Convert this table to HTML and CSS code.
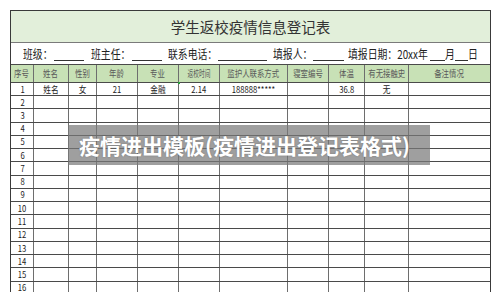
FILE: index.html
```html
<!DOCTYPE html>
<html lang="zh">
<head>
<meta charset="utf-8">
<link rel="stylesheet" href="styles.css">
</head>
<body>
<div class="sheet">
  <div class="title">学生返校疫情信息登记表</div>
  <div class="info">
    <div class="lab w31"><span>班级：</span></div><div class="ul w30"></div>
    <div class="lab w41 g7"><span>班主任：</span></div><div class="ul w30"></div>
    <div class="lab w50 g6"><span>联系电话：</span></div><div class="ul w49"></div>
    <div class="lab w40 g6"><span>填报人：</span></div><div class="ul w31"></div>
    <div class="lab w82 g4"><span>填报日期：20xx年</span></div><div class="ul w15"></div>
    <div class="lab w10"><span>月</span></div><div class="ul w13"></div>
    <div class="lab w12"><span>日</span></div>
  </div>
  <div class="row head">
    <div class="c"><span>序号</span></div>
    <div class="c"><span>姓名</span></div>
    <div class="c"><span>性别</span></div>
    <div class="c"><span>年龄</span></div>
    <div class="c"><span>专业</span></div>
    <div class="c"><span class="nar">返校时间</span></div>
    <div class="c"><span>监护人联系方式</span></div>
    <div class="c"><span>寝室编号</span></div>
    <div class="c"><span>体温</span></div>
    <div class="c"><span>有无接触史</span></div>
    <div class="c"><span>备注情况</span></div>
  </div>
  <div class="row first">
    <div class="c"><span>1</span></div>
    <div class="c"><span>姓名</span></div>
    <div class="c"><span>女</span></div>
    <div class="c"><span>21</span></div>
    <div class="c"><span>金融</span></div>
    <div class="c sel"><span>2.14</span></div>
    <div class="c"><span>188888*****</span></div>
    <div class="c"></div>
    <div class="c"><span>36.8</span></div>
    <div class="c"><span>无</span></div>
    <div class="c"></div>
  </div>
  <div class="row"><div class="c"><span>2</span></div><div class="c"></div><div class="c"></div><div class="c"></div><div class="c"></div><div class="c"></div><div class="c"></div><div class="c"></div><div class="c"></div><div class="c"></div><div class="c"></div></div>
  <div class="row"><div class="c"><span>3</span></div><div class="c"></div><div class="c"></div><div class="c"></div><div class="c"></div><div class="c"></div><div class="c"></div><div class="c"></div><div class="c"></div><div class="c"></div><div class="c"></div></div>
  <div class="row"><div class="c"><span>4</span></div><div class="c"></div><div class="c"></div><div class="c"></div><div class="c"></div><div class="c"></div><div class="c"></div><div class="c"></div><div class="c"></div><div class="c"></div><div class="c"></div></div>
  <div class="row"><div class="c"><span>5</span></div><div class="c"></div><div class="c"></div><div class="c"></div><div class="c"></div><div class="c"></div><div class="c"></div><div class="c"></div><div class="c"></div><div class="c"></div><div class="c"></div></div>
  <div class="row"><div class="c"><span>6</span></div><div class="c"></div><div class="c"></div><div class="c"></div><div class="c"></div><div class="c"></div><div class="c"></div><div class="c"></div><div class="c"></div><div class="c"></div><div class="c"></div></div>
  <div class="row"><div class="c"><span>7</span></div><div class="c"></div><div class="c"></div><div class="c"></div><div class="c"></div><div class="c"></div><div class="c"></div><div class="c"></div><div class="c"></div><div class="c"></div><div class="c"></div></div>
  <div class="row"><div class="c"><span>8</span></div><div class="c"></div><div class="c"></div><div class="c"></div><div class="c"></div><div class="c"></div><div class="c"></div><div class="c"></div><div class="c"></div><div class="c"></div><div class="c"></div></div>
  <div class="row"><div class="c"><span>9</span></div><div class="c"></div><div class="c"></div><div class="c"></div><div class="c"></div><div class="c"></div><div class="c"></div><div class="c"></div><div class="c"></div><div class="c"></div><div class="c"></div></div>
  <div class="row"><div class="c"><span>10</span></div><div class="c"></div><div class="c"></div><div class="c"></div><div class="c"></div><div class="c"></div><div class="c"></div><div class="c"></div><div class="c"></div><div class="c"></div><div class="c"></div></div>
  <div class="row"><div class="c"><span>11</span></div><div class="c"></div><div class="c"></div><div class="c"></div><div class="c"></div><div class="c"></div><div class="c"></div><div class="c"></div><div class="c"></div><div class="c"></div><div class="c"></div></div>
  <div class="row"><div class="c"><span>12</span></div><div class="c"></div><div class="c"></div><div class="c"></div><div class="c"></div><div class="c"></div><div class="c"></div><div class="c"></div><div class="c"></div><div class="c"></div><div class="c"></div></div>
  <div class="row"><div class="c"><span>13</span></div><div class="c"></div><div class="c"></div><div class="c"></div><div class="c"></div><div class="c"></div><div class="c"></div><div class="c"></div><div class="c"></div><div class="c"></div><div class="c"></div></div>
  <div class="row"><div class="c"><span>14</span></div><div class="c"></div><div class="c"></div><div class="c"></div><div class="c"></div><div class="c"></div><div class="c"></div><div class="c"></div><div class="c"></div><div class="c"></div><div class="c"></div></div>
  <div class="row"><div class="c"><span>15</span></div><div class="c"></div><div class="c"></div><div class="c"></div><div class="c"></div><div class="c"></div><div class="c"></div><div class="c"></div><div class="c"></div><div class="c"></div><div class="c"></div></div>
  <div class="row"><div class="c"><span>16</span></div><div class="c"></div><div class="c"></div><div class="c"></div><div class="c"></div><div class="c"></div><div class="c"></div><div class="c"></div><div class="c"></div><div class="c"></div><div class="c"></div></div>
</div>
<div class="banner">疫情进出模板(疫情进出登记表格式)</div>
</body>
</html>
```

FILE: styles.css
```css
html, body {
  margin: 0;
  padding: 0;
  background: #fff;
  overflow: hidden;
  height: 292px;
}
body {
  position: relative;
  padding: 10px 0 0 10px;
  box-sizing: border-box;
  font-family: "Noto Sans CJK SC", "Noto Sans", sans-serif;
  color: #222;
}
.sheet {
  width: 481px;
  border: 1px solid #3a3a3a;
  border-bottom: none;
  box-sizing: border-box;
}
.title {
  height: 32px;
  box-sizing: border-box;
  border-bottom: 1px solid #7a7a7a;
  background: #e2efda;
  display: flex;
  align-items: center;
  justify-content: center;
  font-size: 14.5px;
  color: #333;
  padding-top: 1px;
  line-height: 1;
}
.info {
  height: 22px;
  box-sizing: border-box;
  border-bottom: 1px solid #4a4a4a;
  display: flex;
  align-items: center;
  padding-left: 12px;
  font-size: 12px;
  line-height: 1;
  color: #222;
  overflow: hidden;
}
.lab {
  flex: none;
  white-space: nowrap;
}
.lab span {
  display: inline-block;
  transform: scaleX(0.82);
  transform-origin: left center;
}
.ul {
  flex: none;
  height: 1px;
  background: #333;
  align-self: flex-end;
  margin-bottom: 3px;
}
.w10 { width: 10px; }
.w12 { width: 12px; }
.w13 { width: 13px; }
.w15 { width: 15px; }
.w30 { width: 30px; }
.w31 { width: 31px; }
.w40 { width: 40px; }
.w41 { width: 41px; }
.w49 { width: 49px; }
.w50 { width: 50px; }
.w82 { width: 82px; }
.g4 { margin-left: 4px; }
.g6 { margin-left: 6px; }
.g7 { margin-left: 7px; }

.row {
  display: grid;
  grid-template-columns: 23px 35px 28px 41px 41px 41px 68px 41px 36px 44px 1fr;
  height: 13.27px;
  box-sizing: border-box;
  border-bottom: 1px solid #4a4a4a;
  font-size: 9px;
  line-height: 1;
}
.row.head {
  height: 18px;
  background: #c8e1b6;
  color: #5a5a5a;
  font-size: 9.5px;
}
.row.first {
  height: 13px;
}
.c {
  border-right: 1px solid #6e6e6e;
  box-sizing: border-box;
  display: flex;
  align-items: center;
  justify-content: center;
  overflow: visible;
  white-space: nowrap;
  position: relative;
}
.c:last-child {
  border-right: none;
}
.c span {
  display: inline-block;
  transform: scaleX(0.85);
}
.row.head .c span {
  transform: scaleX(0.78);
}
.row.head .c span.nar {
  transform: scaleX(0.6);
}
.sel::before {
  content: "";
  position: absolute;
  left: -1px;
  top: -1px;
  width: 2px;
  height: 2px;
  background: #2a9d3a;
}
.banner {
  position: absolute;
  left: 68px;
  top: 125px;
  width: 362px;
  height: 40px;
  box-sizing: border-box;
  padding-left: 11px;
  background: rgba(122, 122, 122, 0.72);
  color: #fff;
  font-weight: 700;
  font-size: 21px;
  line-height: 40px;
  white-space: nowrap;
  text-shadow: 0 0 2px rgba(0, 0, 0, 0.25);
}
```
